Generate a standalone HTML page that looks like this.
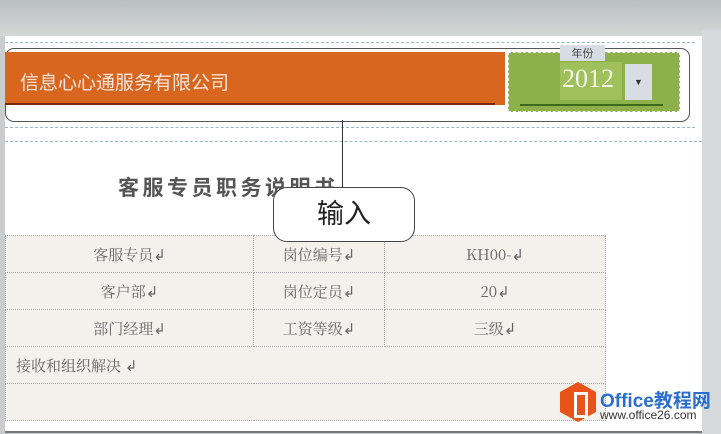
<!DOCTYPE html>
<html><head><meta charset="utf-8"><style>
body{margin:0;width:721px;height:434px;overflow:hidden;background:#c9cdcd;font-family:"Liberation Sans","Noto Sans CJK SC",sans-serif;position:relative}
.a{position:absolute}
.page{left:5px;top:36px;width:697px;height:395px;background:#fff;border-bottom:2px solid #777}
.dash{border-top:1px dashed #9bb;height:0}
td{border:1px dotted #aaa;color:#666;font-size:15px;text-align:center;padding:0;height:36px;font-family:"Noto Serif CJK SC","Liberation Serif",serif}
</style></head><body>
<div class="a" style="left:0;top:0;width:721px;height:36px;background:linear-gradient(#b9bfbf,#d3d7d6)"></div>
<div class="a page"></div>
<div class="a" style="left:702px;top:30px;width:19px;height:404px;background:#d6d9d9"></div>
<div class="a dash" style="left:5px;top:42px;width:690px"></div>
<div class="a dash" style="left:5px;top:127px;width:690px"></div>
<div class="a dash" style="left:5px;top:141px;width:697px"></div>
<div class="a" style="left:5px;top:48px;width:683px;height:72px;border:1px solid #555;border-radius:9px"></div>
<div class="a" style="left:5px;top:52px;width:500px;height:53px;background:#d9661f"></div>
<div class="a" style="left:5px;top:103px;width:490px;height:2px;background:#7a2a0a"></div>
<div class="a" style="left:20px;top:68px;color:#f5e6dc;font-size:19px">信息心心通服务有限公司</div>
<div class="a" style="left:508px;top:52px;width:172px;height:60px;background:#8db04a;border:1px dashed #eee;box-sizing:border-box"></div>
<div class="a" style="left:520px;top:104px;width:143px;height:2px;background:#3d6a1a"></div>
<div class="a" style="left:560px;top:45px;width:45px;height:16px;background:#d6dde4;font-size:11px;color:#444;text-align:center">年份</div>
<div class="a" style="left:560px;top:62px;width:62px;height:38px;background:#9fc05a"></div>
<div class="a" style="left:562px;top:64px;color:#f3f7e8;font-size:26px;font-family:'Liberation Serif',serif">2012</div>
<div class="a" style="left:625px;top:64px;width:27px;height:36px;background:#d8dde3;text-align:center;line-height:36px;font-size:9px;color:#333">▼</div>
<div class="a" style="left:342px;top:120px;width:1px;height:70px;background:#333"></div>
<div class="a" style="left:118px;top:172px;font-size:21px;letter-spacing:3.5px;font-weight:bold;color:#555">客服专员职务说明书</div>
<table class="a" style="left:5px;top:235px;width:601px;border-collapse:collapse;background:#f2f1ec">
<tr><td style="width:247px">客服专员↲</td><td style="width:130px">岗位编号↲</td><td>KH00-↲</td></tr>
<tr><td>客户部↲</td><td>岗位定员↲</td><td>20↲</td></tr>
<tr><td>部门经理↲</td><td>工资等级↲</td><td>三级↲</td></tr>
<tr><td colspan="3" style="text-align:left;padding-left:10px">接收和组织解决 ↲</td></tr>
<tr><td colspan="3"></td></tr>
</table>
<div class="a" style="left:273px;top:187px;width:140px;height:53px;background:#fff;border:1px solid #444;border-radius:14px;font-size:27px;text-align:center;line-height:53px;color:#222">输入</div>
<div class="a" style="left:560px;top:382px;width:36px;height:40px;background:#e8531a;clip-path:polygon(50% 0,100% 25%,100% 75%,50% 100%,0 75%,0 25%)"></div>
<div class="a" style="left:574px;top:392px;width:8px;height:20px;border:3px solid #fff"></div>
<div class="a" style="left:600px;top:386px;color:#2a6fcf;font-size:19px;font-weight:bold">Office教程网</div>
<div class="a" style="left:600px;top:408px;color:#333;font-size:12px">www.office26.com</div>
</body></html>
